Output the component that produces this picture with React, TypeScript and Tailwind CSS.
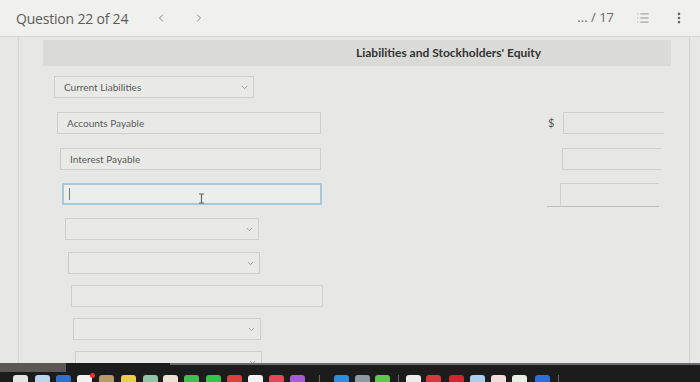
import { ChevronDown, ChevronLeft, ChevronRight, EllipsisVertical, List } from "lucide-react";

const fieldClassName =
  "h-[22px] border border-[#cfd0cc] bg-[#e9eae7] flex items-center pl-[9px] pr-[4px] text-[10px] text-[#5a5a5a]";

const labelFont = { fontFamily: "Lato, 'Open Sans', sans-serif" };

function SelectField({ offset, width, label }: { offset: number; width: number; label?: string }) {
  return (
    <div className="flex" style={{ marginLeft: offset }}>
      <div className={`${fieldClassName} justify-between`} style={{ width }}>
        <span>{label}</span>
        <ChevronDown className="h-[9px] w-[9px] text-[#8a8a8a]" strokeWidth={2} />
      </div>
    </div>
  );
}

function TextField({ offset, width, label }: { offset: number; width: number; label?: string }) {
  return (
    <div className="flex" style={{ marginLeft: offset }}>
      <div className={fieldClassName} style={{ width }}>
        {label}
      </div>
    </div>
  );
}

const dock = [
  { x: 13, c: "#e4e4e4" },
  { x: 35, c: "#b9d6ee" },
  { x: 56, c: "#2f6fd0" },
  { x: 77, c: "#f1f1f1" },
  { x: 99, c: "#b89a68" },
  { x: 121, c: "#e8cf44" },
  { x: 143, c: "#8fc7a6" },
  { x: 163, c: "#ece3d2" },
  { x: 184, c: "#3fbf4f" },
  { x: 206, c: "#35c44a" },
  { x: 227, c: "#d9433e" },
  { x: 248, c: "#f2f2f2" },
  { x: 269, c: "#e4465a" },
  { x: 290, c: "#a75bd6" },
  { x: 334, c: "#2b8fe0" },
  { x: 355, c: "#8d9aa5" },
  { x: 375, c: "#5cc84c" },
  { x: 406, c: "#ececec" },
  { x: 426, c: "#d6383b" },
  { x: 449, c: "#d3242f" },
  { x: 470, c: "#a9cfee" },
  { x: 491, c: "#f4dcdc" },
  { x: 512, c: "#e5f0e5" },
  { x: 535, c: "#2c6fdc" },
];

export default function App() {
  return (
    <div className="flex h-[382px] w-[700px] flex-col overflow-hidden bg-[#e7e8e5]">
      {/* top bar */}
      <header
        className="flex h-[37px] shrink-0 items-center border-b border-[#d5d6d3] bg-[#f0f0ee] pl-[16px] pr-[14px] text-[#5b5b5b]"
        style={{ fontFamily: "'Open Sans', sans-serif" }}
      >
        <span className="text-[14px] tracking-[-0.2px]">Question 22 of 24</span>
        <ChevronLeft className="ml-[27px] h-[12px] w-[12px] text-[#666]" strokeWidth={1.5} />
        <ChevronRight className="ml-[26px] h-[12px] w-[12px] text-[#666]" strokeWidth={1.5} />
        <span className="ml-auto text-[13px] text-[#6a6a6a]">... / 17</span>
        <List className="ml-[22px] h-[14px] w-[14px] text-[#8a8a8a]" strokeWidth={1.5} />
        <EllipsisVertical className="ml-[22px] h-[14px] w-[14px] text-[#666]" strokeWidth={2.5} />
      </header>

      {/* body */}
      <main className="relative flex min-h-0 flex-1 flex-col overflow-hidden" style={labelFont}>
        <div className="ml-[18px] mr-[10px] flex flex-1 flex-col border-l border-r border-[#d6d7d4] pl-[24px] pr-[2px]">
          <div className="mt-[3px] flex h-[26px] w-[628px] shrink-0 items-center bg-[#dadbd8] pl-[313px] text-[12px] font-bold text-[#333]">
            Liabilities and Stockholders' Equity
          </div>

          <div className="mt-[10px]">
            <SelectField offset={11} width={200} label="Current Liabilities" />
          </div>

          <div className="mt-[14px] flex items-center">
            <div className="w-[290px]">
              <TextField offset={14} width={264} label="Accounts Payable" />
            </div>
            <span className="ml-[215px] w-[15px] text-[11px] text-[#555]">$</span>
            <div className="h-[22px] w-[101px] border border-[#cfd0cc] border-r-0"></div>
          </div>

          <div className="mt-[14px] flex items-center">
            <div className="w-[290px]">
              <TextField offset={17} width={261} label="Interest Payable" />
            </div>
            <div className="ml-[229px] h-[22px] w-[99px] border border-[#cfd0cc] border-r-0"></div>
          </div>

          <div className="mt-[13px] flex items-start">
            <div className="w-[290px]">
              <div className="ml-[19px] flex h-[22px] w-[260px] items-center border-2 border-[#a8c9dc] bg-[#eceeec] pl-[5px]">
                <span className="h-[12px] w-px bg-[#777]"></span>
                <svg className="ml-[128px] mt-[8px]" width="7" height="11" viewBox="0 0 7 11">
                  <path d="M1 1h5M3.5 1v9M1 10h5" stroke="#666" strokeWidth="1.2" fill="none" />
                </svg>
              </div>
            </div>
            <div className="ml-[214px] w-[112px] border-b border-[#bdbebb] pl-[13px] pb-px">
              <div className="h-[22px] w-[99px] border border-[#cfd0cc] border-r-0 border-b-0"></div>
            </div>
          </div>

          <div className="mt-[11px]">
            <SelectField offset={22} width={194} />
          </div>
          <div className="mt-[12px]">
            <SelectField offset={25} width={192} />
          </div>
          <div className="mt-[11px]">
            <TextField offset={28} width={252} />
          </div>
          <div className="mt-[11px]">
            <SelectField offset={30} width={188} />
          </div>
          <div className="mt-[11px] shrink-0">
            <SelectField offset={32} width={187} />
          </div>
        </div>
      </main>

      {/* dock strip */}
      <div className="relative h-[19px] shrink-0 bg-[#1c1c1c]">
        <div className="absolute left-0 top-0 h-[9px] w-[66px] bg-[#5a5754]"></div>
        <div className="absolute left-[170px] right-0 top-0 h-[2px] bg-[#6c6c6c]"></div>
        {dock.map((d) => (
          <div
            key={d.x}
            className="absolute top-[12px] h-[12px] w-[15px] rounded-[3px]"
            style={{ left: d.x, backgroundColor: d.c }}
          ></div>
        ))}
        <div className="absolute left-[319px] top-[12px] h-[8px] w-px bg-[#666]"></div>
        <div className="absolute left-[398px] top-[12px] h-[8px] w-px bg-[#666]"></div>
        <div className="absolute left-[558px] top-[12px] h-[8px] w-px bg-[#666]"></div>
        <div className="absolute left-[90px] top-[10px] h-[5px] w-[5px] rounded-full bg-[#e33]"></div>
      </div>
    </div>
  );
}
